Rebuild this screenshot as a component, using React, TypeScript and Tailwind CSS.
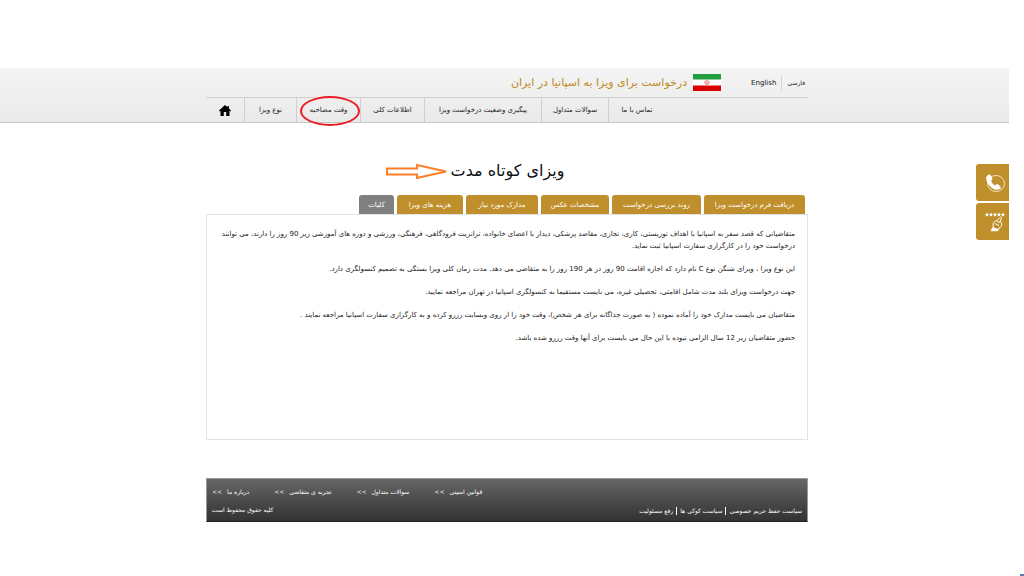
import clsx from 'clsx';

interface NavItem {
  label: string;
  width: string;
  circled?: boolean;
}

const navItems: NavItem[] = [
  { label: 'نوع ویزا', width: 'w-[52px]' },
  { label: 'وقت مصاحبه', width: 'w-16', circled: true },
  { label: 'اطلاعات کلی', width: 'w-16' },
  { label: 'پیگیری وضعیت درخواست ویزا', width: 'w-[117px]' },
  { label: 'سوالات متداول', width: 'w-[67px]' },
  { label: 'تماس با ما', width: 'w-[56px]' },
];

const tabs = [
  { label: 'دریافت فرم درخواست ویزا', width: 'w-[101px]' },
  { label: 'روند بررسی درخواست', width: 'w-[89px]' },
  { label: 'مشخصات عکس', width: 'w-[68px]' },
  { label: 'مدارک مورد نیاز', width: 'w-[72px]' },
  { label: 'هزینه های ویزا', width: 'w-[66px]' },
  { label: 'کلیات', width: 'w-[35px]', active: true },
];

const paragraphs = [
  'متقاضیانی که قصد سفر به اسپانیا با اهداف توریستی، کاری، تجاری، مقاصد پزشکی، دیدار با اعضای خانواده، ترانزیت فرودگاهی، فرهنگی، ورزشی و دوره های آموزشی زیر 90 روز را دارند، می توانند درخواست خود را در کارگزاری سفارت اسپانیا ثبت نماید.',
  'این نوع ویزا ، ویزای شنگن نوع C نام دارد که اجازه اقامت 90 روز در هر 190 روز را به متقاضی می دهد. مدت زمان کلی ویزا بستگی به تصمیم کنسولگری دارد.',
  'جهت درخواست ویزای بلند مدت شامل اقامتی، تحصیلی غیره، می بایست مستقیما به کنسولگری اسپانیا در تهران مراجعه نمایید.',
  'متقاضیان می بایست مدارک خود را آماده نموده ( به صورت جداگانه برای هر شخص)، وقت خود را از روی وبسایت رزرو کرده و به کارگزاری سفارت اسپانیا مراجعه نمایند .',
  'حضور متقاضیان زیر 12 سال الزامی نبوده با این حال می بایست برای آنها وقت رزرو شده باشد.',
];

const footerLinks = ['درباره ما', 'تجربه ی متقاضی', 'سوالات متداول', 'قوانین امنیتی'];
const policyLinks = ['سیاست حفظ حریم خصوصی', 'سیاست کوکی ها', 'رفع مسئولیت'];

export default function App() {
  return (
    <div className="relative min-h-screen overflow-hidden bg-white pt-[68px] font-['DejaVu_Sans',sans-serif] text-[7px] leading-3 text-[#222]">
      <Header />
      <main className="mr-[15px] pl-[5px]">
        <div className="mx-auto max-w-[602px]">
          <div className="flex h-[72px] items-center justify-center gap-[2px] pt-6 pr-16">
            <Arrow />
            <h1 dir="rtl" className="text-[16px] leading-6 whitespace-nowrap text-[#111]">ویزای کوتاه مدت</h1>
          </div>
          <div role="tablist" dir="rtl" className="flex gap-[3px] pr-[3px]">
            {tabs.map((tab) => (
              <Tab key={tab.label} {...tab} />
            ))}
          </div>
          <section dir="rtl" className="min-h-[226px] space-y-[11px] border border-[#dfe4ea] px-3 pt-[13px]">
            {paragraphs.map((text) => (
              <p key={text}>{text}</p>
            ))}
          </section>
          <Footer />
        </div>
      </main>
      <SideButtons />
      <span className="absolute right-0 bottom-0 h-[2px] w-1 bg-[#5b7ba6]" />
    </div>
  );
}

function Header() {
  return (
    <header className="mr-[15px] border-b border-[#c6c6c6] bg-linear-to-b from-[#f4f4f4] to-[#eaeaea] pl-[5px]">
      <div className="mx-auto max-w-[602px]">
        <div dir="rtl" className="flex h-[30px] items-center border-b border-[#d0d0d0]">
          <div className="flex items-center px-[3px]">
            <a href="#fa" className="border-l border-[#d5d5d5] py-[2px] pl-[5px] text-[6px]">فارسی</a>
            <a href="#en" className="pr-[5px] text-[#111]">English</a>
          </div>
          <div className="mr-[27px] flex items-center gap-[6px]">
            <Flag />
            <p className="text-[11px] leading-4 whitespace-nowrap text-[#bf8a22]">درخواست برای ویزا به اسپانیا در ایران</p>
          </div>
        </div>
        <nav className="flex h-6">
          <a href="#home" aria-label="Home" className="flex w-[39px] items-center justify-center border-r border-[#d0d0d0]">
            <HomeIcon />
          </a>
          {navItems.map((item, i) => (
            <a
              key={item.label}
              href="#nav"
              dir="rtl"
              className={clsx(
                'relative flex items-center justify-center whitespace-nowrap',
                item.width,
                i < navItems.length - 1 && 'border-r border-[#d0d0d0]',
              )}
            >
              {item.label}
              {item.circled && (
                <span className="absolute -top-[2px] right-0 h-[30px] w-[60px] rounded-[50%] border-2 border-[#ed1c24]" />
              )}
            </a>
          ))}
        </nav>
      </div>
    </header>
  );
}

function Tab({ label, width, active }: { label: string; width: string; active?: boolean }) {
  return (
    <button
      type="button"
      role="tab"
      aria-selected={!!active}
      className={clsx(
        'h-[19px] rounded-t-[3px] text-center whitespace-nowrap text-white',
        width,
        active ? 'bg-[#808080]' : 'bg-[#bf8f2c]',
      )}
    >
      {label}
    </button>
  );
}

function Footer() {
  return (
    <footer className="mt-[38px] flex h-11 items-end justify-between border border-[#999] border-b-[#222] bg-linear-to-b from-[#666] to-[#333] px-[5px] pb-[5px] text-[6px] text-white">
      <div className="flex flex-col gap-[6px]">
        <div className="flex gap-[25px]">
          {footerLinks.map((label) => (
            <a key={label} href="#footer" dir="rtl" className="flex gap-[5px] whitespace-nowrap">
              <span>{label}</span>
              <span>&gt;&gt;</span>
            </a>
          ))}
        </div>
        <p dir="rtl" className="text-left">کلیه حقوق محفوظ است</p>
      </div>
      <div dir="rtl" className="flex divide-x divide-white pb-px">
        {policyLinks.map((label) => (
          <a key={label} href="#policy" className="px-[3px] leading-2 whitespace-nowrap first:pr-0">{label}</a>
        ))}
      </div>
    </footer>
  );
}

function SideButtons() {
  return (
    <div className="absolute top-[164px] right-[15px] flex flex-col gap-[2px]">
      <button type="button" aria-label="Call" className="flex h-[37px] w-[33px] items-center justify-center rounded-l-[3px] bg-[#bf8f2c] pl-1">
        <svg viewBox="0 0 20 20" className="size-5" fill="none">
          <ellipse cx="11" cy="10.500" rx="8.500" ry="8" stroke="#f3e3c0" strokeWidth="1" />
          <path d="M3 2C0 4 1 8 4 12s7 6 11 4c1-1 1-2 0-3l-2-1.500c-1-1-2 0-3 1-2-1-3-3-4-5 1-1 2-1 1-3L5.500 2C5 1 4 1 3 2Z" fill="white" />
        </svg>
      </button>
      <button type="button" aria-label="Rate" className="flex h-[37px] w-[33px] items-center justify-center rounded-l-[3px] bg-[#bf8f2c] pl-1">
        <svg viewBox="0 0 20 20" className="size-5" fill="none" stroke="white">
          <path
            d="M2 .500l.6 1.300 1.400.2-1 1 .2 1.400L2 3.700.8 4.400 1 3 0 2l1.400-.2ZM6 .500l.6 1.300L8 2 7 3l.2 1.400L6 3.700l-1.200.7L5 3 4 2l1.400-.2ZM10 .500l.6 1.300L12 2l-1 1 .2 1.400-1.200-.7-1.200.7L9 3 8 2l1.400-.2ZM14 .500l.6 1.300L16 2l-1 1 .2 1.400-1.200-.7-1.200.7L13 3l-1-1 1.400-.2ZM18 .500l.6 1.300L20 2l-1 1 .2 1.400-1.200-.7-1.200.7L17 3l-1-1 1.400-.2Z"
            fill="white"
            stroke="none"
          />
          <path d="M8.500 16l-.5-3c0-3 2-4 4-4.500l3-3c1-1 2 0 1.400 1L15 9.500c3 1.500 2 5-1 7l-2 1-3.500-1.500ZM10 11.500l4 2M12 9l3 1.500" />
          <path d="M7.500 15.500 6 19h7l.5-1.500Z" fill="white" strokeWidth=".5" />
        </svg>
      </button>
    </div>
  );
}

function HomeIcon() {
  return (
    <svg viewBox="0 0 12 11" className="h-[11px] w-3" fill="#000">
      <path d="M6 0 0 5.600l.7.8L1.500 5.700V11h3.300V7h2.400v4h3.300V5.700l.8.7.7-.8L9.900 3.600V1H8.500v1.300Z" />
    </svg>
  );
}

function Flag() {
  return (
    <svg viewBox="0 0 28 17" className="h-[17px] w-7">
      <path d="M0 0h28v17H0Z" fill="#fff" />
      <path d="M0 0h28v5.500H0Z" fill="#239f40" />
      <path d="M0 5h28v1H0Z" fill="#8fcc9e" />
      <path d="M0 11.500h28V17H0Z" fill="#da0000" />
      <path d="M14 6v5M12.800 6.800c-1.500 1.500-1 3 .6 3.800M15.200 6.800c1.500 1.500 1 3-.6 3.800" stroke="#e04a4a" strokeWidth=".8" fill="none" />
    </svg>
  );
}

function Arrow() {
  return (
    <svg viewBox="0 0 63 16" className="h-4 w-[63px]" fill="none">
      <path d="M1 5.500h30V2L60 8.500 31 15v-3.500H1Z" stroke="#ff7f27" strokeWidth="2" />
    </svg>
  );
}
